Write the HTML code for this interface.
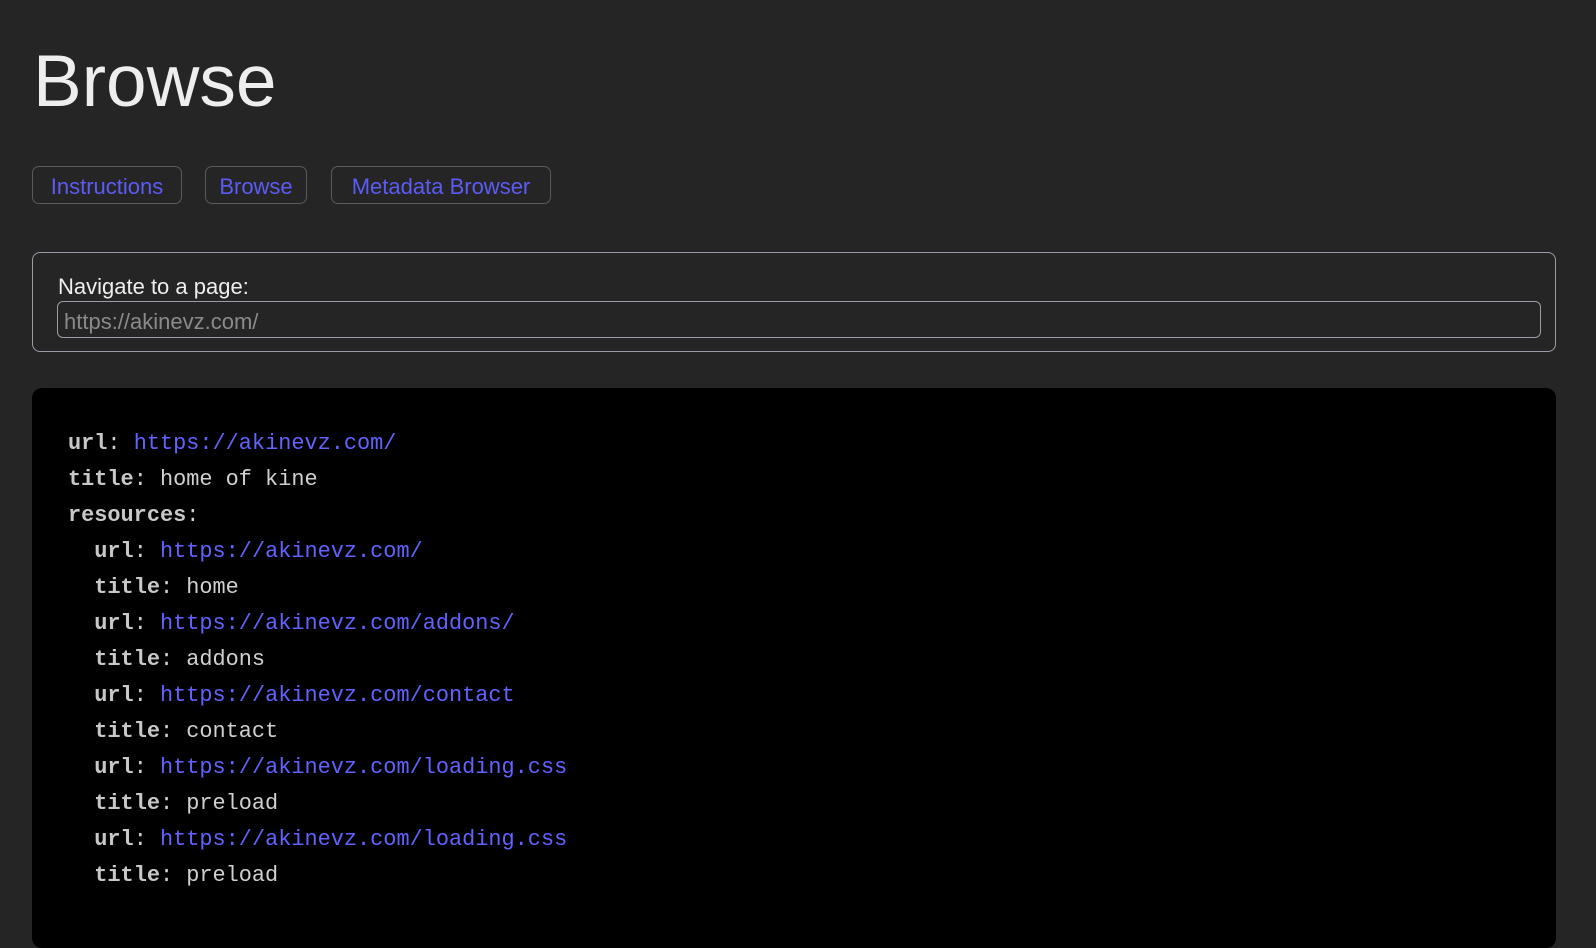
<!DOCTYPE html>
<html><head><meta charset="utf-8"><style>
html,body{margin:0;padding:0;background:#252525;width:1596px;height:917px;overflow:hidden;font-family:"Liberation Sans",sans-serif;color:#e8e8e8}
h1{position:absolute;left:33px;top:37px;margin:0;font-weight:normal;font-size:73px;line-height:90px;color:#eee}
.btn{position:absolute;top:166px;height:36px;border:1px solid #5a5a5a;border-radius:7px;color:#5b5bf5;font-size:22px;line-height:39px;box-sizing:content-box;text-align:center}
.nav{position:absolute;left:32px;top:252px;width:1522px;height:98px;border:1px solid #9a9ca8;border-radius:8px}
.lbl{position:absolute;left:25px;top:21px;font-size:22px;color:#eee}
.inp{position:absolute;left:24px;top:48px;width:1484px;height:37px;border:1px solid #9a9ca8;border-radius:6px;font-size:22px;line-height:40px;color:#8a8a8a;padding-left:6px;box-sizing:border-box}
.code{position:absolute;left:32px;top:388px;width:1524px;height:560px;background:#000;border-radius:10px}
pre{position:absolute;left:36px;top:38px;margin:0;font-family:"Liberation Mono",monospace;font-size:21.9px;line-height:36px;color:#d0d0d0}
b{color:#c8c8c8}
a{color:#6262ff;text-decoration:none}
</style></head><body>
<h1>Browse</h1>
<div class="btn" style="left:32px;width:148px">Instructions</div>
<div class="btn" style="left:205px;width:100px">Browse</div>
<div class="btn" style="left:331px;width:218px">Metadata Browser</div>
<div class="nav"><div class="lbl">Navigate to a page:</div><div class="inp">https://akinevz.com/</div></div>
<div class="code"><pre><b>url</b>: <a>https://akinevz.com/</a>
<b>title</b>: home of kine
<b>resources</b>:
  <b>url</b>: <a>https://akinevz.com/</a>
  <b>title</b>: home
  <b>url</b>: <a>https://akinevz.com/addons/</a>
  <b>title</b>: addons
  <b>url</b>: <a>https://akinevz.com/contact</a>
  <b>title</b>: contact
  <b>url</b>: <a>https://akinevz.com/loading.css</a>
  <b>title</b>: preload
  <b>url</b>: <a>https://akinevz.com/loading.css</a>
  <b>title</b>: preload</pre></div>
</body></html>
